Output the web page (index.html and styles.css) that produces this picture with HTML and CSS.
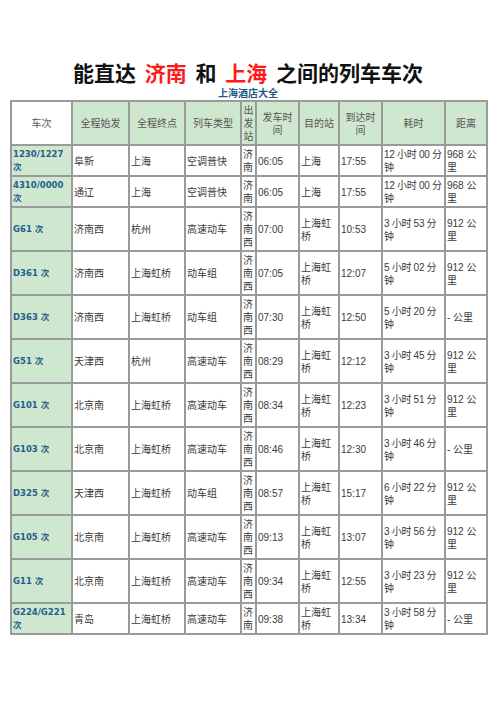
FILE: index.html
```html
<!DOCTYPE html>
<html lang="zh">
<head>
<meta charset="utf-8">
<title>能直达济南和上海之间的列车车次</title>
<link rel="stylesheet" href="styles.css">
</head>
<body>
<div class="page">
  <h1 class="title">能直达 <span class="city">济南</span> 和 <span class="city">上海</span> 之间的列车车次</h1>
  <div class="sub">上海酒店大全</div>
  <table class="trains">
    <colgroup>
      <col class="c1"><col class="c2"><col class="c3"><col class="c4"><col class="c5">
      <col class="c6"><col class="c7"><col class="c8"><col class="c9"><col class="c10">
    </colgroup>
    <thead>
      <tr>
        <th class="first">车次</th><th>全程始发</th><th>全程终点</th><th>列车类型</th><th>出发站</th>
        <th>发车时间</th><th>目的站</th><th>到达时间</th><th>耗时</th><th>距离</th>
      </tr>
    </thead>
    <tbody>
      <tr><td class="no">1230/1227 次</td><td>阜新</td><td>上海</td><td>空调普快</td><td>济南</td><td>06:05</td><td>上海</td><td>17:55</td><td class="dur">12 小时 00 分钟</td><td>968 公里</td></tr>
      <tr><td class="no">4310/0000 次</td><td>通辽</td><td>上海</td><td>空调普快</td><td>济南</td><td>06:05</td><td>上海</td><td>17:55</td><td class="dur">12 小时 00 分钟</td><td>968 公里</td></tr>
      <tr><td class="no">G61 次</td><td>济南西</td><td>杭州</td><td>高速动车</td><td>济南西</td><td>07:00</td><td>上海虹桥</td><td>10:53</td><td class="dur">3 小时 53 分钟</td><td>912 公里</td></tr>
      <tr><td class="no">D361 次</td><td>济南西</td><td>上海虹桥</td><td>动车组</td><td>济南西</td><td>07:05</td><td>上海虹桥</td><td>12:07</td><td class="dur">5 小时 02 分钟</td><td>912 公里</td></tr>
      <tr><td class="no">D363 次</td><td>济南西</td><td>上海虹桥</td><td>动车组</td><td>济南西</td><td>07:30</td><td>上海虹桥</td><td>12:50</td><td class="dur">5 小时 20 分钟</td><td>- 公里</td></tr>
      <tr><td class="no">G51 次</td><td>天津西</td><td>杭州</td><td>高速动车</td><td>济南西</td><td>08:29</td><td>上海虹桥</td><td>12:12</td><td class="dur">3 小时 45 分钟</td><td>912 公里</td></tr>
      <tr><td class="no">G101 次</td><td>北京南</td><td>上海虹桥</td><td>高速动车</td><td>济南西</td><td>08:34</td><td>上海虹桥</td><td>12:23</td><td class="dur">3 小时 51 分钟</td><td>912 公里</td></tr>
      <tr><td class="no">G103 次</td><td>北京南</td><td>上海虹桥</td><td>高速动车</td><td>济南西</td><td>08:46</td><td>上海虹桥</td><td>12:30</td><td class="dur">3 小时 46 分钟</td><td>- 公里</td></tr>
      <tr><td class="no">D325 次</td><td>天津西</td><td>上海虹桥</td><td>动车组</td><td>济南西</td><td>08:57</td><td>上海虹桥</td><td>15:17</td><td class="dur">6 小时 22 分钟</td><td>912 公里</td></tr>
      <tr><td class="no">G105 次</td><td>北京南</td><td>上海虹桥</td><td>高速动车</td><td>济南西</td><td>09:13</td><td>上海虹桥</td><td>13:07</td><td class="dur">3 小时 56 分钟</td><td>912 公里</td></tr>
      <tr><td class="no">G11 次</td><td>北京南</td><td>上海虹桥</td><td>高速动车</td><td>济南西</td><td>09:34</td><td>上海虹桥</td><td>12:55</td><td class="dur">3 小时 23 分钟</td><td>912 公里</td></tr>
      <tr><td class="no">G224/G221 次</td><td>青岛</td><td>上海虹桥</td><td>高速动车</td><td>济南</td><td>09:38</td><td>上海虹桥</td><td>13:34</td><td class="dur">3 小时 58 分钟</td><td>- 公里</td></tr>
    </tbody>
  </table>
</div>
</body>
</html>
```
FILE: styles.css
```css
html, body {
  margin: 0;
  padding: 0;
  background: #ffffff;
}
.page {
  padding: 60px 10px 20px 10px;
  font-family: "Liberation Sans", "Noto Sans CJK SC", sans-serif;
  color: #333333;
}
.title {
  margin: 0;
  height: 24px;
  font-size: 21px;
  line-height: 24px;
  font-weight: bold;
  text-align: center;
  color: #111111;
  font-family: "Noto Sans CJK SC", sans-serif;
  word-spacing: 4px;
}
.city {
  color: #ff1a1a;
}
.sub {
  margin-top: 4px;
  margin-bottom: 0;
  font-size: 10px;
  line-height: 12px;
  font-weight: bold;
  text-align: center;
  color: #225a86;
}
.trains {
  width: 476px;
  table-layout: fixed;
  border-collapse: separate;
  border-spacing: 0;
  border: 1px solid #9a9a9a;
  font-size: 10px;
  line-height: 13px;
}
.c1 { width: 61px; }
.c2 { width: 57px; }
.c3 { width: 56px; }
.c4 { width: 56px; }
.c5 { width: 15px; }
.c6 { width: 43px; }
.c7 { width: 40px; }
.c8 { width: 43px; }
.c9 { width: 63px; }
.c10 { width: 42px; }
.trains th,
.trains td {
  border: 1px solid #9a9a9a;
  padding: 2px 1px 1px 1px;
  vertical-align: middle;
  overflow: hidden;
}
.trains th {
  background: #cfe7cf;
  font-weight: normal;
  text-align: center;
  color: #555555;
}
.trains th.first {
  background: #ffffff;
}
.trains td {
  text-align: left;
  color: #3a3a3a;
}
.trains td.dur {
  letter-spacing: -0.3px;
}
.trains td.no {
  background: #cfe7cf;
  color: #1f5f8c;
  font-weight: bold;
  font-size: 8.5px;
  font-family: "DejaVu Sans", "Noto Sans CJK SC", sans-serif;
}
```
